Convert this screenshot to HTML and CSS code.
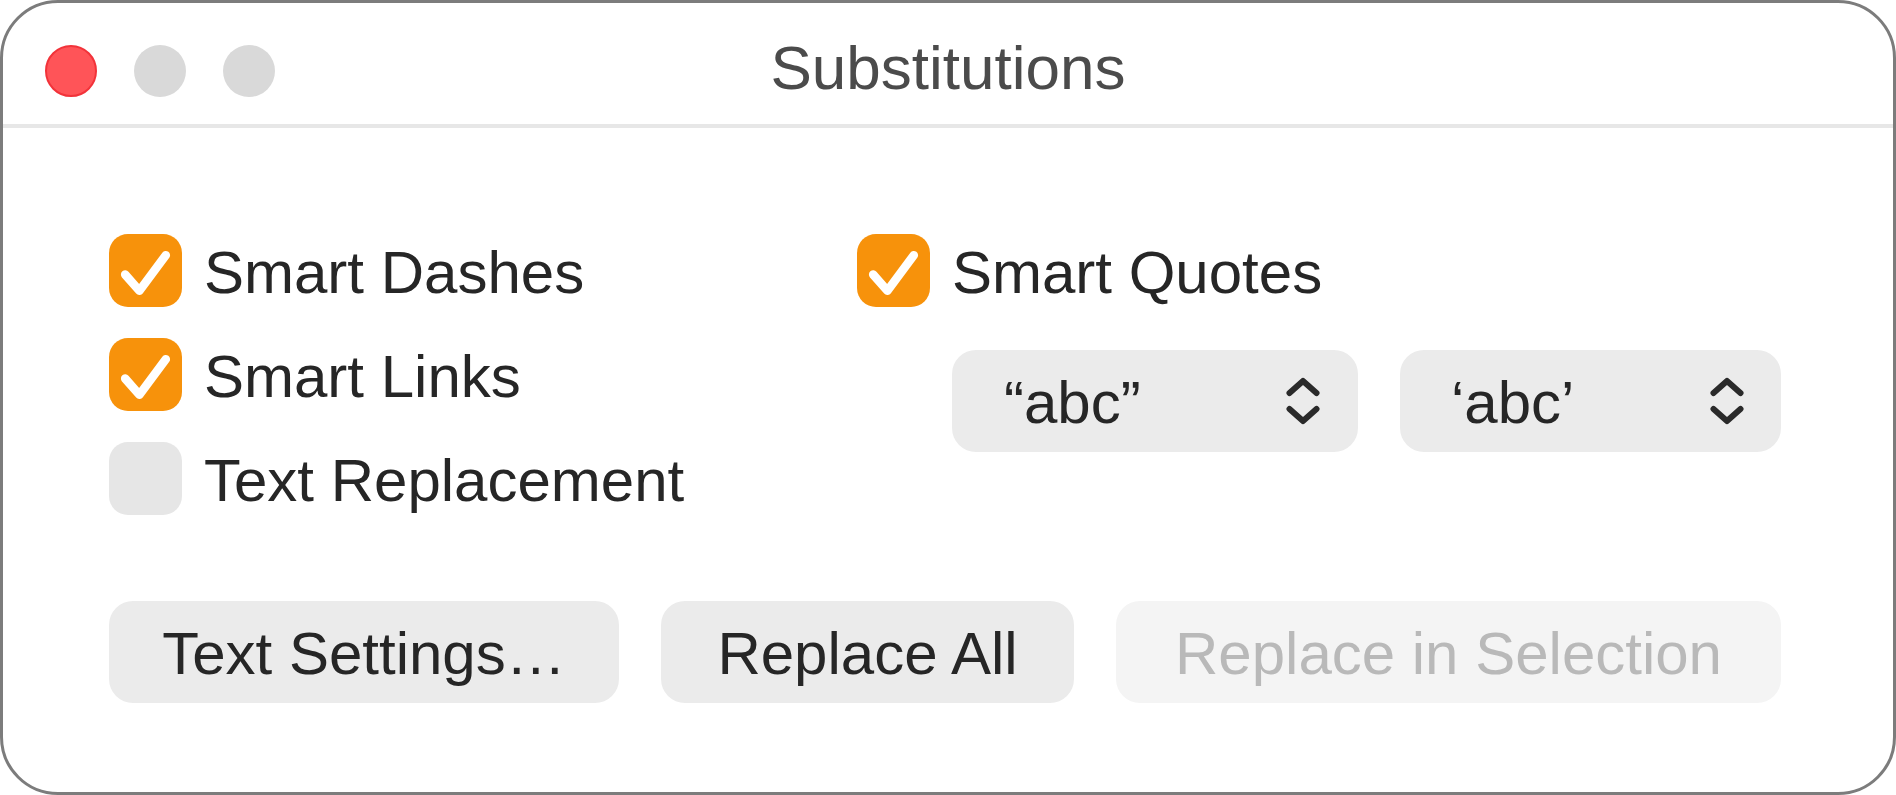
FILE: index.html
```html
<!DOCTYPE html>
<html>
<head>
<meta charset="utf-8">
<link rel="stylesheet" href="styles.css">
</head>
<body>
<div class="window">
  <div class="titlebar">
    <div class="lights">
      <span class="light close"></span>
      <span class="light"></span>
      <span class="light"></span>
    </div>
    <div class="title">Substitutions</div>
    <div></div>
  </div>
  <div class="content">
    <div class="options">
      <div class="col-left">
        <div class="check-row">
          <span class="box on"><svg viewBox="0 0 72 72" class="tick"><path d="M16 40 L30 56 L56 21"/></svg></span>
          <span class="label">Smart Dashes</span>
        </div>
        <div class="check-row">
          <span class="box on"><svg viewBox="0 0 72 72" class="tick"><path d="M16 40 L30 56 L56 21"/></svg></span>
          <span class="label">Smart Links</span>
        </div>
        <div class="check-row">
          <span class="box"></span>
          <span class="label">Text Replacement</span>
        </div>
      </div>
      <div class="col-right">
        <div class="check-row">
          <span class="box on"><svg viewBox="0 0 72 72" class="tick"><path d="M16 40 L30 56 L56 21"/></svg></span>
          <span class="label">Smart Quotes</span>
        </div>
        <div class="popups">
          <div class="popup double"><span>“abc”</span>
            <svg class="chev" viewBox="0 0 34 50"><path d="M3.5 17 L17 5 L30.5 17"/><path d="M3.5 33 L17 45 L30.5 33"/></svg>
          </div>
          <div class="popup single"><span>‘abc’</span>
            <svg class="chev" viewBox="0 0 34 50"><path d="M3.5 17 L17 5 L30.5 17"/><path d="M3.5 33 L17 45 L30.5 33"/></svg>
          </div>
        </div>
      </div>
    </div>
    <div class="buttons">
      <div class="btn settings">Text Settings…</div>
      <div class="btn replace-all">Replace All</div>
      <div class="btn disabled">Replace in Selection</div>
    </div>
  </div>
</div>
</body>
</html>
```
FILE: styles.css
```css
html, body {
  margin: 0;
  padding: 0;
  background: #ffffff;
}
body {
  font-family: "Liberation Sans", Arial, sans-serif;
  color: #262626;
}
.window {
  width: 1896px;
  height: 795px;
  box-sizing: border-box;
  border: 3px solid #7c7c7c;
  border-radius: 58px;
  background: #ffffff;
  overflow: hidden;
}
.titlebar {
  height: 125px;
  box-sizing: border-box;
  padding-top: 14px;
  border-bottom: 4px solid #e7e7e7;
  display: grid;
  grid-template-columns: 1fr auto 1fr;
  align-items: center;
}
.lights {
  display: flex;
  gap: 37px;
  padding-left: 42px;
}
.light {
  width: 52px;
  height: 52px;
  border-radius: 50%;
  background: #d9d9d9;
  box-sizing: border-box;
}
.light.close {
  background: #ff5458;
  border: 2px solid #f2333a;
}
.title {
  font-size: 62px;
  color: #4b4b4b;
  line-height: 1;
  padding-bottom: 6px;
}
.content {
  padding: 106px 0 0 106px;
}
.options {
  display: flex;
}
.col-left {
  width: 748px;
  display: flex;
  flex-direction: column;
  gap: 32px;
}
.col-right {
  display: flex;
  flex-direction: column;
}
.check-row {
  display: flex;
  align-items: center;
  gap: 22px;
  height: 72px;
}
.box {
  width: 73px;
  height: 73px;
  border-radius: 19px;
  background: #e6e6e6;
  display: flex;
  flex: none;
}
.box.on {
  background: #f7920b;
}
.tick {
  width: 73px;
  height: 73px;
  fill: none;
  stroke: #ffffff;
  stroke-width: 8.5;
  stroke-linecap: round;
  stroke-linejoin: round;
}
.label {
  font-size: 60px;
  line-height: 1;
  padding-top: 5px;
}
.popups {
  display: flex;
  gap: 42px;
  margin-top: 44px;
  padding-left: 95px;
}
.popup {
  height: 102px;
  border-radius: 24px;
  background: #ebebeb;
  display: flex;
  align-items: center;
  justify-content: space-between;
  box-sizing: border-box;
  font-size: 60px;
}
.popup span {
  padding-top: 2px;
}
.popup.double {
  width: 406px;
  padding: 0 38px 0 52px;
}
.popup.single {
  width: 381px;
  padding: 0 37px 0 51px;
}
.chev {
  width: 34px;
  height: 50px;
  fill: none;
  stroke: #2a2a2a;
  stroke-width: 6;
  stroke-linecap: round;
  stroke-linejoin: round;
}
.buttons {
  display: flex;
  gap: 42px;
  margin-top: 87px;
}
.btn {
  height: 102px;
  border-radius: 24px;
  background: #ebebeb;
  display: flex;
  align-items: center;
  justify-content: center;
  font-size: 60px;
  box-sizing: border-box;
  padding-top: 3px;
}
.btn.settings { width: 510px; }
.btn.replace-all { width: 413px; }
.btn.disabled {
  width: 665px;
  background: #f4f4f4;
  color: #b9b9b9;
}
```
